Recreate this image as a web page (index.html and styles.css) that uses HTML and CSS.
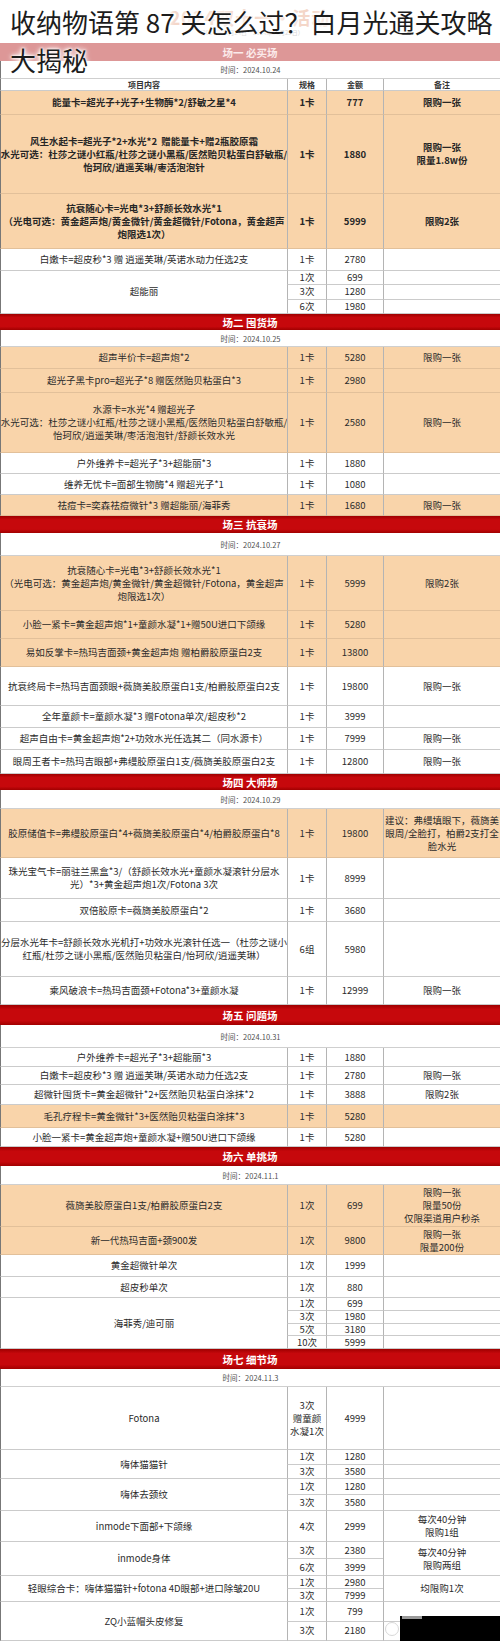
FILE: index.html
```html
<!DOCTYPE html>
<html lang="zh">
<head>
<meta charset="utf-8">
<title>收纳物语第 87 关怎么过？白月光通关攻略大揭秘</title>
<link rel="stylesheet" href="styles.css">
</head>
<body>
<div class="poster">
  <div class="top">
    <div class="faint-title">2024双十一·活动</div>
    <div class="faint-sub">（2024年10月24日—2024年11月25日）</div>
  </div>
  <h1 class="title">收纳物语第 87 关怎么过？白月光通关攻略<br>大揭秘</h1>

  <div class="band pink h18">场一 必买场</div>
  <div class="time h18">时间：2024.10.24</div>
  <div class="row head h12">
    <div class="c">项目内容</div><div class="c">规格</div><div class="c">金额</div><div class="c">备注</div>
  </div>
  <div class="row o b h24">
    <div class="c">能量卡=超光子+光子+生物酶*2/舒敏之星*4</div><div class="c">1卡</div><div class="c">777</div><div class="c">限购一张</div>
  </div>
  <div class="row o b h79">
    <div class="c">风生水起卡=超光子*2+水光*2&nbsp; 赠能量卡+赠2瓶胶原霜<br>水光可选：杜莎之谜小红瓶/杜莎之谜小黑瓶/医然贻贝粘蛋白舒敏瓶/<br>怡珂欣/逍遥芙琳/枣活泡泡针</div><div class="c">1卡</div><div class="c">1880</div><div class="c">限购一张<br>限量1.8w份</div>
  </div>
  <div class="row o b h55">
    <div class="c">抗衰随心卡=光电*3+舒颜长效水光*1<br>（光电可选：黄金超声炮/黄金微针/黄金超微针/Fotona，黄金超声<br>炮限选1次）</div><div class="c">1卡</div><div class="c">5999</div><div class="c">限购2张</div>
  </div>
  <div class="row h22">
    <div class="c">白嫩卡=超皮秒*3 赠 逍遥芙琳/英诺水动力任选2支</div><div class="c">1卡</div><div class="c">2780</div><div class="c"></div>
  </div>
  <div class="row m3 h43">
    <div class="c span">超能丽</div>
    <div class="c">1次</div><div class="c">699</div><div class="c"></div>
    <div class="c">3次</div><div class="c">1280</div><div class="c"></div>
    <div class="c">6次</div><div class="c">1980</div><div class="c"></div>
  </div>

  <div class="band h16">场二 囤货场</div>
  <div class="time h17">时间：2024.10.25</div>
  <div class="row o h22">
    <div class="c">超声半价卡=超声炮*2</div><div class="c">1卡</div><div class="c">5280</div><div class="c">限购一张</div>
  </div>
  <div class="row o h24">
    <div class="c">超光子黑卡pro=超光子*8 赠医然贻贝粘蛋白*3</div><div class="c">1卡</div><div class="c">2980</div><div class="c"></div>
  </div>
  <div class="row o h60">
    <div class="c">水源卡=水光*4 赠超光子<br>水光可选：杜莎之谜小红瓶/杜莎之谜小黑瓶/医然贻贝粘蛋白舒敏瓶/<br>怡珂欣/逍遥芙琳/枣活泡泡针/舒颜长效水光</div><div class="c">1卡</div><div class="c">2580</div><div class="c">限购一张</div>
  </div>
  <div class="row h21">
    <div class="c">户外维养卡=超光子*3+超能丽*3</div><div class="c">1卡</div><div class="c">1880</div><div class="c"></div>
  </div>
  <div class="row h21">
    <div class="c">维养无忧卡=面部生物酶*4 赠超光子*1</div><div class="c">1卡</div><div class="c">1080</div><div class="c"></div>
  </div>
  <div class="row o h21">
    <div class="c">祛痘卡=奕森祛痘微针*3 赠超能丽/海菲秀</div><div class="c">1卡</div><div class="c">1680</div><div class="c">限购一张</div>
  </div>

  <div class="band h17">场三 抗衰场</div>
  <div class="time h23">时间：2024.10.27</div>
  <div class="row o h55">
    <div class="c">抗衰随心卡=光电*3+舒颜长效水光*1<br>（光电可选：黄金超声炮/黄金微针/黄金超微针/Fotona，黄金超声<br>炮限选1次）</div><div class="c">1卡</div><div class="c">5999</div><div class="c">限购2张</div>
  </div>
  <div class="row o h28">
    <div class="c">小脸一紧卡=黄金超声炮*1+童颜水凝*1+赠50U进口下颌缘</div><div class="c">1卡</div><div class="c">5280</div><div class="c"></div>
  </div>
  <div class="row o h28">
    <div class="c">易如反掌卡=热玛吉面颈+黄金超声炮 赠柏爵胶原蛋白2支</div><div class="c">1卡</div><div class="c">13800</div><div class="c"></div>
  </div>
  <div class="row h39">
    <div class="c">抗衰终局卡=热玛吉面颈眼+薇旖美胶原蛋白1支/柏爵胶原蛋白2支</div><div class="c">1卡</div><div class="c">19800</div><div class="c">限购一张</div>
  </div>
  <div class="row h22">
    <div class="c">全年童颜卡=童颜水凝*3 赠Fotona单次/超皮秒*2</div><div class="c">1卡</div><div class="c">3999</div><div class="c"></div>
  </div>
  <div class="row h22">
    <div class="c">超声自由卡=黄金超声炮*2+功效水光任选其二（同水源卡）</div><div class="c">1卡</div><div class="c">7999</div><div class="c">限购一张</div>
  </div>
  <div class="row h24">
    <div class="c">眼周王者卡=热玛吉眼部+弗缦胶原蛋白1支/薇旖美胶原蛋白2支</div><div class="c">1卡</div><div class="c">12800</div><div class="c">限购一张</div>
  </div>

  <div class="band h16">场四 大师场</div>
  <div class="time h19">时间：2024.10.29</div>
  <div class="row o h49">
    <div class="c">胶原储值卡=弗缦胶原蛋白*4+薇旖美胶原蛋白*4/柏爵胶原蛋白*8</div><div class="c">1卡</div><div class="c">19800</div><div class="c">建议：弗缦填眼下，薇旖美<br>眼周/全脸打，柏爵2支打全<br>脸水光</div>
  </div>
  <div class="row h41">
    <div class="c">珠光宝气卡=丽驻兰黑盒*3/（舒颜长效水光+童颜水凝滚针分层水<br>光）*3+黄金超声炮1次/Fotona 3次</div><div class="c">1卡</div><div class="c">8999</div><div class="c"></div>
  </div>
  <div class="row h23">
    <div class="c">双倍胶原卡=薇旖美胶原蛋白*2</div><div class="c">1卡</div><div class="c">3680</div><div class="c"></div>
  </div>
  <div class="row h55">
    <div class="c">分层水光年卡=舒颜长效水光机打+功效水光滚针任选一（杜莎之谜小<br>红瓶/杜莎之谜小黑瓶/医然贻贝粘蛋白/怡珂欣/逍遥芙琳）</div><div class="c">6组</div><div class="c">5980</div><div class="c"></div>
  </div>
  <div class="row h28">
    <div class="c">乘风破浪卡=热玛吉面颈+Fotona*3+童颜水凝</div><div class="c">1卡</div><div class="c">12999</div><div class="c">限购一张</div>
  </div>

  <div class="band h20">场五 问题场</div>
  <div class="time h23">时间：2024.10.31</div>
  <div class="row h19">
    <div class="c">户外维养卡=超光子*3+超能丽*3</div><div class="c">1卡</div><div class="c">1880</div><div class="c"></div>
  </div>
  <div class="row h18">
    <div class="c">白嫩卡=超皮秒*3 赠 逍遥芙琳/英诺水动力任选2支</div><div class="c">1卡</div><div class="c">2780</div><div class="c">限购一张</div>
  </div>
  <div class="row h20">
    <div class="c">超微针囤货卡=黄金超微针*2+医然贻贝粘蛋白涂抹*2</div><div class="c">1卡</div><div class="c">3888</div><div class="c">限购2张</div>
  </div>
  <div class="row o h23">
    <div class="c">毛孔疗程卡=黄金微针*3+医然贻贝粘蛋白涂抹*3</div><div class="c">1卡</div><div class="c">5280</div><div class="c"></div>
  </div>
  <div class="row h19">
    <div class="c">小脸一紧卡=黄金超声炮+童颜水凝+赠50U进口下颌缘</div><div class="c">1卡</div><div class="c">5280</div><div class="c"></div>
  </div>

  <div class="band h19">场六 单挑场</div>
  <div class="time h19">时间：2024.11.1</div>
  <div class="row o h42">
    <div class="c">薇旖美胶原蛋白1支/柏爵胶原蛋白2支</div><div class="c">1次</div><div class="c">699</div><div class="c">限购一张<br>限量50份<br>仅限渠道用户秒杀</div>
  </div>
  <div class="row o h28">
    <div class="c">新一代热玛吉面+颈900发</div><div class="c">1次</div><div class="c">9800</div><div class="c">限购一张<br>限量200份</div>
  </div>
  <div class="row h22">
    <div class="c">黄金超微针单次</div><div class="c">1次</div><div class="c">1999</div><div class="c"></div>
  </div>
  <div class="row h21">
    <div class="c">超皮秒单次</div><div class="c">1次</div><div class="c">880</div><div class="c"></div>
  </div>
  <div class="row m4 h51">
    <div class="c span">海菲秀/迪可丽</div>
    <div class="c">1次</div><div class="c">699</div><div class="c"></div>
    <div class="c">3次</div><div class="c">1980</div><div class="c"></div>
    <div class="c">5次</div><div class="c">3180</div><div class="c"></div>
    <div class="c">10次</div><div class="c">5999</div><div class="c"></div>
  </div>

  <div class="band h20">场七 细节场</div>
  <div class="time h18">时间：2024.11.3</div>
  <div class="row h63">
    <div class="c">Fotona</div><div class="c">3次<br>赠童颜<br>水凝1次</div><div class="c">4999</div><div class="c"></div>
  </div>
  <div class="row m2 h29">
    <div class="c span">嗨体猫猫针</div>
    <div class="c">1次</div><div class="c">1280</div><div class="c"></div>
    <div class="c">3次</div><div class="c">3580</div><div class="c"></div>
  </div>
  <div class="row m2 h32">
    <div class="c span">嗨体去颈纹</div>
    <div class="c">1次</div><div class="c">1280</div><div class="c"></div>
    <div class="c">3次</div><div class="c">3580</div><div class="c"></div>
  </div>
  <div class="row h31">
    <div class="c">inmode下面部+下颌缘</div><div class="c">4次</div><div class="c">2999</div><div class="c">每次40分钟<br>限购1组</div>
  </div>
  <div class="row m2 h34">
    <div class="c span">inmode身体</div>
    <div class="c span4">每次40分钟<br>限购两组</div>
    <div class="c">3次</div><div class="c">2380</div>
    <div class="c">6次</div><div class="c">3999</div>
  </div>
  <div class="row m2 h26">
    <div class="c span">轻眼综合卡：嗨体猫猫针+fotona 4D眼部+进口除皱20U</div>
    <div class="c span4">均限购1次</div>
    <div class="c">1次</div><div class="c">2980</div>
    <div class="c">3次</div><div class="c">7999</div>
  </div>
  <div class="row m2 h39">
    <div class="c span">ZQ小蓝帽头皮修复</div>
    <div class="c">1次</div><div class="c">799</div><div class="c"></div>
    <div class="c">3次</div><div class="c">2180</div><div class="c"></div>
  </div>

  <div class="wm-logo"></div>
  <div class="wm"><span class="wm-tag"></span></div>
</div>
</body>
</html>
```
FILE: styles.css
```css
* { box-sizing: border-box; margin: 0; padding: 0; }
html, body { background: #fff; }
body {
  width: 500px;
  font-family: "Noto Sans CJK SC", "Noto Sans", sans-serif;
  color: #2b2b2b;
}
.poster { position: relative; width: 500px; overflow: hidden; }

.top {
  height: 43px;
  display: flex;
  flex-direction: column;
  align-items: center;
  justify-content: center;
  gap: 1px;
}
.faint-title {
  font-size: 18px;
  font-weight: 700;
  line-height: 22px;
  color: #f4d6c8;
  letter-spacing: 1px;
}
.faint-sub { font-size: 6px; line-height: 8px; color: #d4d4d4; }

.title {
  position: absolute;
  left: 10px;
  top: 3px;
  z-index: 5;
  font-size: 26px;
  font-weight: 400;
  line-height: 38px;
  color: #1c1c1c;
  white-space: nowrap;
  text-shadow: 0 0 2px #fff, 0 0 3px #fff, 0 0 5px #fff, 0 0 6px #fff;
}

.band {
  display: flex;
  align-items: center;
  justify-content: center;
  color: #fff;
  font-size: 10.5px;
  font-weight: 700;
  background: linear-gradient(#9e0000, #c6080c 22%, #c6080c 78%, #a10000);
}
.band.pink { background: #dd9797; color: #fbeaea; }

.time {
  display: flex;
  align-items: center;
  justify-content: center;
  font-size: 7.5px;
  color: #505050;
  border-left: 1px solid #777;
  border-bottom: 1px solid #cfcfcf;
}

.row {
  display: grid;
  grid-template-columns: 287px 39px 57px 117px;
  width: 500px;
}
.m2 { grid-template-rows: repeat(2, minmax(0, 1fr)); }
.m3 { grid-template-rows: repeat(3, minmax(0, 1fr)); }
.m4 { grid-template-rows: repeat(4, minmax(0, 1fr)); }
.span { grid-column: 1; grid-row: 1 / -1; }
.span4 { grid-column: 4; grid-row: 1 / -1; }

.c {
  display: flex;
  align-items: center;
  justify-content: center;
  text-align: center;
  font-size: 9.5px;
  line-height: 13px;
  white-space: nowrap;
  min-width: 0;
  min-height: 0;
  border-left: 1px solid #b4b4b4;
  border-bottom: 1px solid #cbcbcb;
}
.row > .c:first-child { border-left-color: #777; }
.m2 .c, .m3 .c, .m4 .c { line-height: 11px; }
.m2 .span4 { line-height: 13px; }
.head .c { font-size: 8px; font-weight: 700; color: #333; }
.o .c { background: #f9d4aa; border-bottom-color: #e2c09a; }
.b .c { font-weight: 700; color: #262626; }

.h12 { height: 12px; }
.h16 { height: 16px; }
.h17 { height: 17px; }
.h18 { height: 18px; }
.h19 { height: 19px; }
.h20 { height: 20px; }
.h21 { height: 21px; }
.h22 { height: 22px; }
.h23 { height: 23px; }
.h24 { height: 24px; }
.h26 { height: 26px; }
.h28 { height: 28px; }
.h29 { height: 29px; }
.h31 { height: 31px; }
.h32 { height: 32px; }
.h34 { height: 34px; }
.h39 { height: 39px; }
.h41 { height: 41px; }
.h42 { height: 42px; }
.h43 { height: 43px; }
.h49 { height: 49px; }
.h51 { height: 51px; }
.h55 { height: 55px; }
.h60 { height: 60px; }
.h63 { height: 63px; }
.h79 { height: 79px; }

.wm {
  position: absolute;
  right: 0;
  bottom: 0;
  width: 100px;
  height: 25px;
  background: #000;
}
.wm-tag {
  position: absolute;
  left: 2px;
  top: 0;
  width: 20px;
  height: 3px;
  background: #9a9a9a;
}
.wm-logo {
  position: absolute;
  left: 385px;
  bottom: 5px;
  width: 14px;
  height: 14px;
  border: 1px solid #d8d8d8;
  border-radius: 50%;
}
```
